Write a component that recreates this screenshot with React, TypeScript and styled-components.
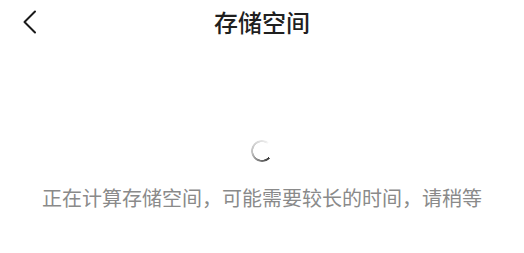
import React from "react";
import styled, { createGlobalStyle } from "styled-components";

const Global = createGlobalStyle`
  html, body { margin: 0; padding: 0; background: #ffffff; }
  body { font-family: "Noto Sans CJK SC", "Noto Sans", sans-serif; }
`;

const Page = styled.div`
  width: 524px;
  height: 253px;
  background: #ffffff;
  display: flex;
  flex-direction: column;
`;

const Header = styled.header`
  height: 44px;
  display: grid;
  grid-template-columns: 60px 1fr 60px;
  align-items: center;
`;

const BackButton = styled.button`
  border: none;
  background: none;
  padding: 0 0 0 22px;
  height: 44px;
  display: flex;
  align-items: center;
  cursor: pointer;
`;

const Title = styled.h1`
  margin: 0;
  text-align: center;
  font-size: 24px;
  font-weight: 500;
  line-height: 44px;
  color: #1f1f1f;
`;

const Body = styled.main`
  display: flex;
  flex-direction: column;
  align-items: center;
  padding-top: 96px;
`;

const Spinner = styled.div`
  width: 22px;
  height: 22px;
  border-radius: 50%;
  background: conic-gradient(from 135deg, #3a3a3a 0deg, #bcbcbc 120deg, #ececec 250deg, rgba(255,255,255,0) 265deg, rgba(255,255,255,0) 360deg);
  -webkit-mask: radial-gradient(circle, transparent 8.6px, #000 9px);
  mask: radial-gradient(circle, transparent 8.6px, #000 9px);
`;

const Message = styled.p`
  margin: 22px 0 0;
  font-size: 20px;
  line-height: 28px;
  color: #8a8a8a;
  white-space: nowrap;
`;

export default function App() {
  return (
    <Page>
      <Global />
      <Header>
        <BackButton aria-label="返回">
          <svg width="16" height="24" viewBox="0 0 16 24" fill="none">
            <path d="M13 1.5 L2.5 12 L13 22.5" stroke="#1a1a1a" strokeWidth="2" strokeLinecap="round" strokeLinejoin="round" />
          </svg>
        </BackButton>
        <Title>存储空间</Title>
        <div />
      </Header>
      <Body>
        <Spinner />
        <Message>正在计算存储空间，可能需要较长的时间，请稍等</Message>
      </Body>
    </Page>
  );
}
